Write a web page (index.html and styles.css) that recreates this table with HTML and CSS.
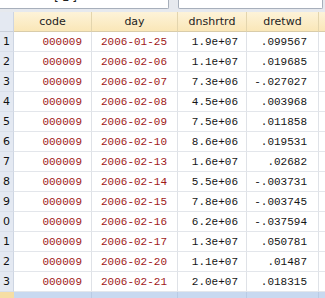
FILE: index.html
```html
<!DOCTYPE html>
<html>
<head>
<meta charset="utf-8">
<link rel="stylesheet" href="styles.css">
</head>
<body>
<div class="app">
  <div class="topbar">
    <div class="box box-left"><span class="boxtext">[1]</span></div>
    <div class="box box-right"></div>
  </div>
  <div class="grid">
    <div class="rn hdr-corner"></div>
    <div class="hd">code</div>
    <div class="hd">day</div>
    <div class="hd">dnshrtrd</div>
    <div class="hd">dretwd</div>
    <div class="hd hd-extra"></div>

    <div class="rn">1</div><div class="c str p1">000009</div><div class="c str p2">2006-01-25</div><div class="c num p3">1.9e+07</div><div class="c num p4">.099567</div><div class="c x"></div>
    <div class="rn">2</div><div class="c str p1">000009</div><div class="c str p2">2006-02-06</div><div class="c num p3">1.1e+07</div><div class="c num p4">.019685</div><div class="c x"></div>
    <div class="rn">3</div><div class="c str p1">000009</div><div class="c str p2">2006-02-07</div><div class="c num p3">7.3e+06</div><div class="c num p4">-.027027</div><div class="c x"></div>
    <div class="rn">4</div><div class="c str p1">000009</div><div class="c str p2">2006-02-08</div><div class="c num p3">4.5e+06</div><div class="c num p4">.003968</div><div class="c x"></div>
    <div class="rn">5</div><div class="c str p1">000009</div><div class="c str p2">2006-02-09</div><div class="c num p3">7.5e+06</div><div class="c num p4">.011858</div><div class="c x"></div>
    <div class="rn">6</div><div class="c str p1">000009</div><div class="c str p2">2006-02-10</div><div class="c num p3">8.6e+06</div><div class="c num p4">.019531</div><div class="c x"></div>
    <div class="rn">7</div><div class="c str p1">000009</div><div class="c str p2">2006-02-13</div><div class="c num p3">1.6e+07</div><div class="c num p4">.02682</div><div class="c x"></div>
    <div class="rn">8</div><div class="c str p1">000009</div><div class="c str p2">2006-02-14</div><div class="c num p3">5.5e+06</div><div class="c num p4">-.003731</div><div class="c x"></div>
    <div class="rn">9</div><div class="c str p1">000009</div><div class="c str p2">2006-02-15</div><div class="c num p3">7.8e+06</div><div class="c num p4">-.003745</div><div class="c x"></div>
    <div class="rn">0</div><div class="c str p1">000009</div><div class="c str p2">2006-02-16</div><div class="c num p3">6.2e+06</div><div class="c num p4">-.037594</div><div class="c x"></div>
    <div class="rn">1</div><div class="c str p1">000009</div><div class="c str p2">2006-02-17</div><div class="c num p3">1.3e+07</div><div class="c num p4">.050781</div><div class="c x"></div>
    <div class="rn">2</div><div class="c str p1">000009</div><div class="c str p2">2006-02-20</div><div class="c num p3">1.1e+07</div><div class="c num p4">.01487</div><div class="c x"></div>
    <div class="rn">3</div><div class="c str p1">000009</div><div class="c str p2">2006-02-21</div><div class="c num p3">2.0e+07</div><div class="c num p4">.018315</div><div class="c x"></div>

    <div class="rn newrow"></div><div class="nb"></div><div class="nb"></div><div class="nb"></div><div class="nb"></div><div class="nb nb-x"></div>
  </div>
</div>
</body>
</html>
```
FILE: styles.css
```css
html, body {
  margin: 0;
  padding: 0;
  background: #e6e9ee;
}
.app {
  width: 325px;
  height: 298px;
  overflow: hidden;
  background: #e6e9ee;
}
.topbar {
  display: flex;
  height: 12px;
  gap: 9px;
  align-items: flex-start;
}
.box {
  height: 8px;
  background: #ffffff;
  border-bottom: 1px solid #a7afbb;
  overflow: hidden;
  position: relative;
}
.box-left {
  width: 168px;
  border-right: 1px solid #a7afbb;
  border-bottom-right-radius: 2px;
}
.box-right {
  width: 143px;
  border-right: 1px solid #a7afbb;
  border-left: 1px solid #a7afbb;
  border-bottom-left-radius: 2px;
  border-bottom-right-radius: 2px;
}
.boxtext {
  position: absolute;
  left: 54px;
  bottom: 5px;
  font-family: "DejaVu Sans", sans-serif;
  font-size: 12px;
  line-height: 12px;
  color: #222;
  letter-spacing: 3px;
}
.grid {
  display: grid;
  grid-template-columns: 14px 78px 86px 69px 72px 20px;
  grid-template-rows: 20px repeat(13, 20px) 10px;
}
.grid > div {
  box-sizing: border-box;
  overflow: hidden;
  white-space: nowrap;
}
.rn {
  background: #e4e9f2;
  border-right: 1px solid #cdd5e2;
  border-bottom: 1px solid #d9dfe9;
  font-family: "DejaVu Sans", sans-serif;
  font-size: 11px;
  line-height: 20px;
  padding-left: 3px;
  color: #111;
}
.hdr-corner {
  background: #e4e9f2;
  border-bottom: 1px solid #c9cfd9;
}
.hd {
  background: linear-gradient(#fdf3d9, #fae7b8);
  border-right: 1px solid #e3d5ae;
  border-bottom: 1px solid #d9ccaa;
  font-family: "DejaVu Sans", sans-serif;
  font-size: 11px;
  line-height: 20px;
  text-align: center;
  color: #222;
}
.c {
  background: #ffffff;
  border-right: 1px solid #dfe2e7;
  border-bottom: 1px solid #e3e6eb;
  font-family: "Liberation Mono", monospace;
  font-size: 11px;
  line-height: 21px;
  text-align: right;
}
.str { color: #a01818; }
.num { color: #151515; }
.p1 { padding-right: 9px; }
.p2 { padding-right: 10px; }
.p3 { padding-right: 8px; }
.p4 { padding-right: 11px; }
.newrow {
  background: #f6dea4;
  border: none;
}
.nb {
  background: #c8d9f0;
  border-right: 1px solid #b9cbe4;
}
```
